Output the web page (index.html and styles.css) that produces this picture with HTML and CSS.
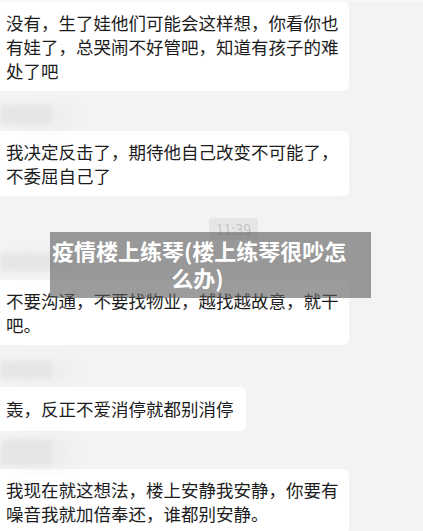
FILE: index.html
```html
<!DOCTYPE html>
<html lang="zh-CN">
<head>
    <meta charset="UTF-8">
    <meta name="viewport" content="width=device-width, initial-scale=1.0">
    <link rel="stylesheet" href="styles.css">
</head>
<body>

<div id="chat">
    <div class="bubble first">没有，生了娃他们可能会这样想，你看你也<br>有娃了，总哭闹不好管吧，知道有孩子的难<br>处了吧</div>
    <div class="name n1"></div>
    <div class="bubble b2">我决定反击了，期待他自己改变不可能了，<br>不委屈自己了</div>
    <div class="time"><span>11:39</span></div>
    <div class="name n2"></div>
    <div class="bubble b3">不要沟通，不要找物业，越找越故意，就干<br>吧。</div>
    <div class="name n3"></div>
    <div class="bubble short">轰，反正不爱消停就都别消停</div>
    <div class="name n4"></div>
    <div class="bubble b5">我现在就这想法，楼上安静我安静，你要有<br>噪音我就加倍奉还，谁都别安静。</div>
</div>

<div id="caption">疫情楼上练琴(楼上练琴很吵怎<br>么办)</div>

</body>
</html>
```

FILE: styles.css
```css
body {
    margin: 0;
    background: #f3f3f3;
    font-family: "Noto Sans CJK SC", "Liberation Sans", sans-serif;
    overflow: hidden;
    position: relative;
    height: 531px;
}
#chat {
    display: flex;
    flex-direction: column;
    align-items: flex-start;
    border-top: 2px solid #f8f8f8;
}
.bubble {
    box-sizing: border-box;
    width: 357px;
    margin-left: -8px;
    padding: 9px 10px 8px 14px;
    background: #fff;
    border-radius: 6px;
    color: #1c1c1c;
    font-size: 17.5px;
    line-height: 24px;
    white-space: nowrap;
}
.bubble.short {
    width: auto;
    padding: 10px 12px 10px 14px;
    margin-top: 8px;
}
.b2 { margin-top: 6px; }
.b3 { margin-top: 9px; }
.b5 { margin-top: 3px; }
.name {
    width: 52px;
    height: 18px;
    background: #e6e6e6;
    border-radius: 3px;
    filter: blur(2px);
    box-shadow: 18px 0 14px #ededed;
}
.n1 { margin-top: 14px; height: 20px; }
.n2 { margin-top: 13px; }
.n3 { margin-top: 16px; }
.n4 { margin-top: 8px; height: 27px; border-radius: 8px 3px 3px 3px; }
.time {
    align-self: flex-start;
    margin: 22px 0 0 209px;
    width: 49px;
    height: 22px;
    background: #e6e6e6;
    border-radius: 3px;
    text-align: center;
}
.time span {
    display: block;
    color: #c4c4c4;
    font-size: 14px;
    line-height: 22px;
    filter: blur(0.6px);
}
#caption {
    position: absolute;
    left: 50px;
    top: 232px;
    width: 321px;
    height: 66px;
    box-sizing: border-box;
    padding: 5px 28px 0 2px;
    background: rgba(95, 95, 95, 0.62);
    color: #fff;
    font-size: 22px;
    font-weight: bold;
    line-height: 27px;
    text-align: center;
    white-space: nowrap;
}
```
